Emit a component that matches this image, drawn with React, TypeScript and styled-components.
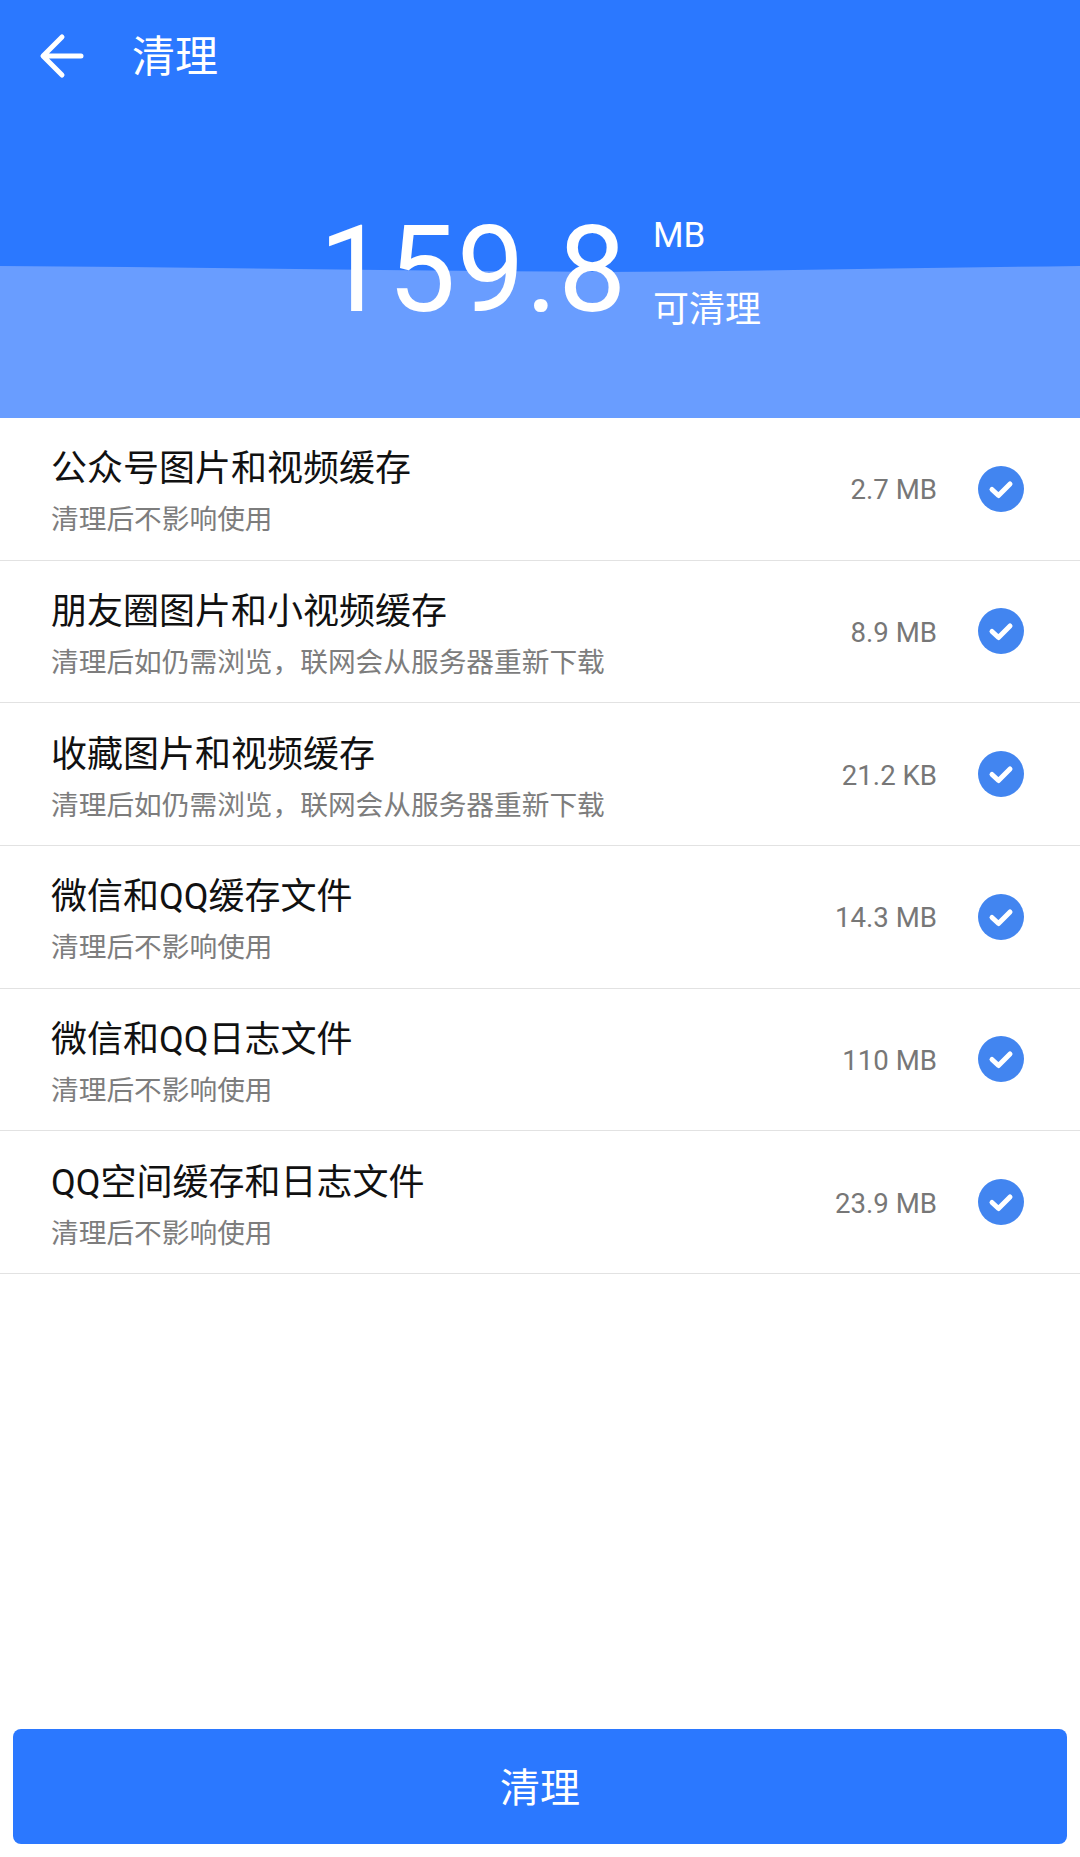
import React from 'react';
import styled, { createGlobalStyle } from 'styled-components';

const GlobalStyle = createGlobalStyle`
html, body {
    margin: 0;
    padding: 0;
    background: #ffffff;
}
* {
    box-sizing: border-box;
}
`;

const FONT = `Roboto, "Noto Sans CJK SC", sans-serif`;

const Page = styled.div`
width: 1080px;
height: 1857px;
display: flex;
flex-direction: column;
background: #ffffff;
font-family: ${FONT};
`;

const Header = styled.header`
position: relative;
height: 418px;
background: #2b78ff;
overflow: hidden;
`;

const Wave = styled.svg`
position: absolute;
left: 0;
bottom: 0;
width: 1080px;
height: 158px;
`;

const HeaderContent = styled.div`
position: relative;
display: flex;
flex-direction: column;
`;

const TopBar = styled.div`
height: 111px;
padding-left: 39px;
display: flex;
align-items: center;
gap: 47px;
color: #ffffff;
`;

const TopTitle = styled.span`
font-size: 43px;
line-height: 1;
padding-top: 3px;
`;

const Summary = styled.div`
margin-top: 99px;
display: flex;
justify-content: center;
align-items: flex-start;
gap: 26px;
color: #ffffff;
`;

const Amount = styled.span`
font-size: 121px;
font-weight: 400;
line-height: 121px;
letter-spacing: 0.8px;
`;

const SummarySide = styled.div`
display: flex;
flex-direction: column;
margin-top: 6px;
`;

const Unit = styled.span`
font-size: 35px;
line-height: 40px;
`;

const SideNote = styled.span`
margin-top: 34px;
font-size: 36px;
line-height: 40px;
`;

const List = styled.ul`
margin: 0;
padding: 0;
list-style: none;
flex: 1;
`;

const Row = styled.li`
height: 142.67px;
padding: 0 56px 0 51px;
display: flex;
align-items: center;
border-bottom: 1px solid #e2e2e2;
`;

const RowText = styled.div`
flex: 1;
display: flex;
flex-direction: column;
padding-top: 8px;
`;

const RowTitle = styled.span`
font-size: 36px;
line-height: 44px;
color: #111111;
`;

const RowSub = styled.span`
margin-top: 11px;
font-size: 27.7px;
line-height: 36px;
color: #7d7d7d;
`;

const RowSize = styled.span`
margin-right: 41px;
padding-top: 2px;
font-size: 27.6px;
color: #777777;
`;

const CheckMark = styled.svg`
width: 46px;
height: 46px;
flex: none;
`;

const Footer = styled.div`
padding: 0 13px 13px;
`;

const CleanButton = styled.button`
width: 100%;
height: 115px;
border: none;
border-radius: 8px;
padding-bottom: 4px;
background: #2b78ff;
color: #ffffff;
font-family: ${FONT};
font-size: 40px;
`;

const rows = [
    { title: '公众号图片和视频缓存', sub: '清理后不影响使用', size: '2.7 MB' },
    { title: '朋友圈图片和小视频缓存', sub: '清理后如仍需浏览，联网会从服务器重新下载', size: '8.9 MB' },
    { title: '收藏图片和视频缓存', sub: '清理后如仍需浏览，联网会从服务器重新下载', size: '21.2 KB' },
    { title: '微信和QQ缓存文件', sub: '清理后不影响使用', size: '14.3 MB' },
    { title: '微信和QQ日志文件', sub: '清理后不影响使用', size: '110 MB' },
    { title: 'QQ空间缓存和日志文件', sub: '清理后不影响使用', size: '23.9 MB' },
];

function BackArrow() {
    return (
        <svg width="46" height="46" viewBox="0 0 46 46" fill="none" stroke="#ffffff" strokeWidth="5" strokeLinecap="round" strokeLinejoin="round">
            <path d="M42 23 H5 M23 4 L4 23 L23 42" />
        </svg>
    );
}

function Check() {
    return (
        <CheckMark viewBox="0 0 46 46">
            <circle cx="23" cy="23" r="23" fill="#4285f0" />
            <path d="M14 23.5 L20.5 29.5 L32 18" fill="none" stroke="#ffffff" strokeWidth="5" strokeLinecap="round" strokeLinejoin="round" />
        </CheckMark>
    );
}

export default function App() {
    return (
        <>
            <GlobalStyle />
            <Page>
                <Header>
                    <Wave viewBox="0 0 1080 158" preserveAspectRatio="none">
                        <path d="M0 6 C 200 7, 400 11, 600 12 C 760 11, 920 8, 1080 6 V158 H0 Z" fill="#699dff" />
                    </Wave>
                    <HeaderContent>
                        <TopBar>
                            <BackArrow />
                            <TopTitle>清理</TopTitle>
                        </TopBar>
                        <Summary>
                            <Amount>159.8</Amount>
                            <SummarySide>
                                <Unit>MB</Unit>
                                <SideNote>可清理</SideNote>
                            </SummarySide>
                        </Summary>
                    </HeaderContent>
                </Header>
                <List>
                    {rows.map((row) => (
                        <Row key={row.title}>
                            <RowText>
                                <RowTitle>{row.title}</RowTitle>
                                <RowSub>{row.sub}</RowSub>
                            </RowText>
                            <RowSize>{row.size}</RowSize>
                            <Check />
                        </Row>
                    ))}
                </List>
                <Footer>
                    <CleanButton>清理</CleanButton>
                </Footer>
            </Page>
        </>
    );
}
